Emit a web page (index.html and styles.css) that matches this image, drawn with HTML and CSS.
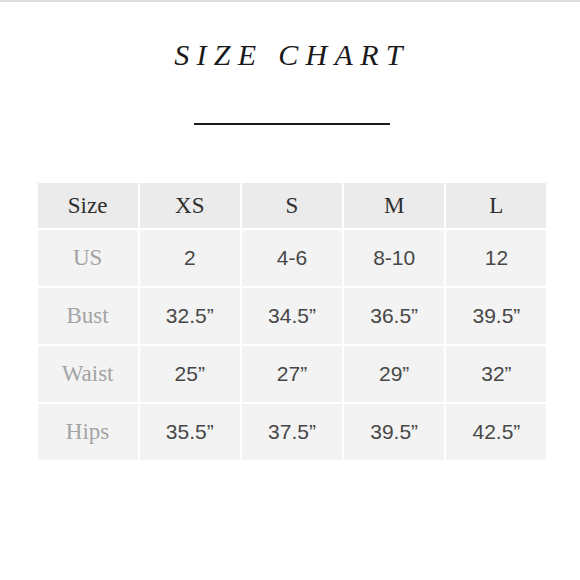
FILE: index.html
```html
<!DOCTYPE html>
<html>
<head>
<meta charset="utf-8">
<link rel="stylesheet" href="styles.css">
</head>
<body>
<div class="page">
  <h1 class="title">SIZE CHART</h1>
  <div class="rule"></div>
  <div class="chart">
    <div class="cell head label">Size</div>
    <div class="cell head">XS</div>
    <div class="cell head">S</div>
    <div class="cell head">M</div>
    <div class="cell head">L</div>

    <div class="cell label">US</div>
    <div class="cell val">2</div>
    <div class="cell val">4-6</div>
    <div class="cell val">8-10</div>
    <div class="cell val">12</div>

    <div class="cell label">Bust</div>
    <div class="cell val">32.5”</div>
    <div class="cell val">34.5”</div>
    <div class="cell val">36.5”</div>
    <div class="cell val">39.5”</div>

    <div class="cell label">Waist</div>
    <div class="cell val">25”</div>
    <div class="cell val">27”</div>
    <div class="cell val">29”</div>
    <div class="cell val">32”</div>

    <div class="cell label">Hips</div>
    <div class="cell val">35.5”</div>
    <div class="cell val">37.5”</div>
    <div class="cell val">39.5”</div>
    <div class="cell val">42.5”</div>
  </div>
</div>
</body>
</html>
```
FILE: styles.css
```css
html, body {
  margin: 0;
  padding: 0;
  background: #ffffff;
}
body {
  width: 580px;
  height: 580px;
  border-top: 2px solid #dcdcdc;
  box-sizing: border-box;
  overflow: hidden;
}
.page {
  display: flex;
  flex-direction: column;
  align-items: center;
  padding-left: 4px;
  padding-top: 38px;
}
.title {
  margin: 0;
  font-family: "Liberation Serif", "Times New Roman", serif;
  font-style: italic;
  font-weight: normal;
  font-size: 30px;
  line-height: 30px;
  letter-spacing: 7.3px;
  padding-left: 0;
  color: #1a1a1a;
}
.rule {
  width: 196px;
  height: 2px;
  background: #1c1c1c;
  margin-top: 53px;
}
.chart {
  margin-top: 58px;
  width: 509px;
  display: grid;
  grid-template-columns: repeat(5, 1fr);
  grid-template-rows: 45px repeat(4, 56px);
  gap: 2px;
}
.cell {
  display: flex;
  align-items: center;
  justify-content: center;
  background: #f3f3f3;
}
.head {
  background: #ebebeb;
  font-family: "Liberation Serif", "Times New Roman", serif;
  color: #2e2e2e;
  font-size: 23px;
}
.label {
  font-family: "Liberation Serif", "Times New Roman", serif;
  color: #a3a3a3;
  font-size: 23px;
}
.head.label {
  color: #2e2e2e;
}
.val {
  font-family: "Liberation Sans", Arial, sans-serif;
  color: #474747;
  font-size: 21px;
}
```
